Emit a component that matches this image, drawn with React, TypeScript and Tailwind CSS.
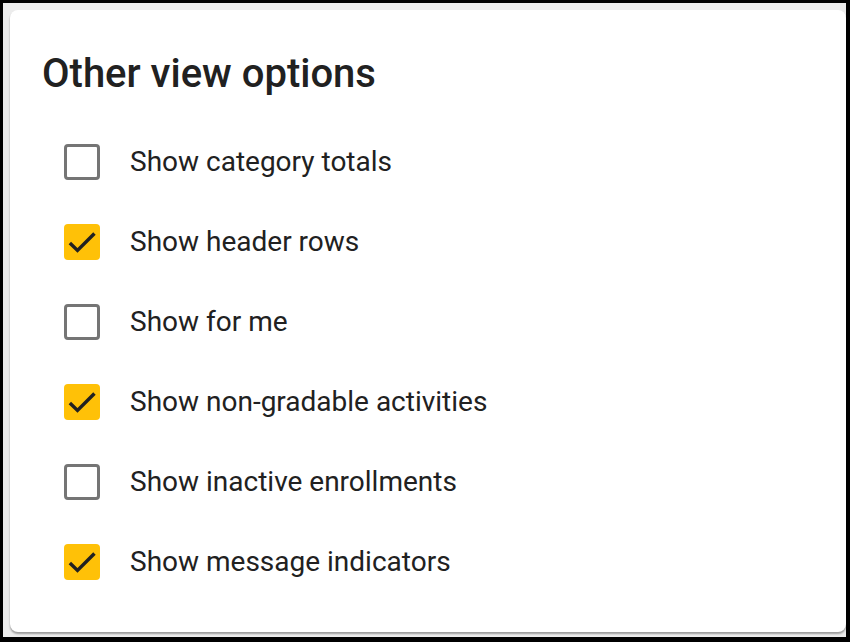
import React from 'react';

interface ViewOption {
  label: string;
  checked: boolean;
}

const initialOptions: ViewOption[] = [
  { label: 'Show category totals', checked: false },
  { label: 'Show header rows', checked: true },
  { label: 'Show for me', checked: false },
  { label: 'Show non-gradable activities', checked: true },
  { label: 'Show inactive enrollments', checked: false },
  { label: 'Show message indicators', checked: true },
];

function CheckBox({ checked }: { checked: boolean }) {
  if (checked) {
    return (
      <span className="relative flex h-9 w-9 shrink-0 items-center justify-center rounded-[4px] bg-[#ffc107]">
        <svg className="absolute inset-0 h-9 w-9" viewBox="0 0 24 24" fill="none" stroke="#212121" strokeWidth={2.3} aria-hidden="true">
          <path d="M3.9 12.6L9 17.6 20.3 6.3" />
        </svg>
      </span>
    );
  }
  return <span className="h-9 w-9 shrink-0 rounded-[4px] border-[3px] border-[#757575] bg-white" />;
}

export default function App() {
  const [options, setOptions] = React.useState(initialOptions);

  const toggle = (index: number) => {
    setOptions(prev => prev.map((o, i) => (i === index ? { ...o, checked: !o.checked } : o)));
  };

  return (
    <div className="h-[642px] w-[850px] bg-black pb-[5px] pl-[3px] pr-[4px] pt-[3px]" style={{ fontFamily: 'Roboto, "Noto Sans", sans-serif' }}>
      <div className="h-full w-full bg-[#ececec] pl-[7px] pt-[7px]">
        <div className="h-[622px] w-[836px] rounded-lg bg-white pl-8 pt-10 shadow-[0_2px_2px_rgba(0,0,0,0.35)]">
          <h2 className="text-[40px] font-medium leading-[48px] text-[#212121]">Other view options</h2>
          <div className="mt-6 flex flex-col">
            {options.map((opt, i) => (
              <button
                key={opt.label}
                onClick={() => toggle(i)}
                className="flex h-20 items-center gap-[30px] pl-[22px] text-left"
                role="checkbox"
                aria-checked={opt.checked}
              >
                <CheckBox checked={opt.checked} />
                <span className="text-[28px] leading-9 text-[#212121]">{opt.label}</span>
              </button>
            ))}
          </div>
        </div>
      </div>
    </div>
  );
}
